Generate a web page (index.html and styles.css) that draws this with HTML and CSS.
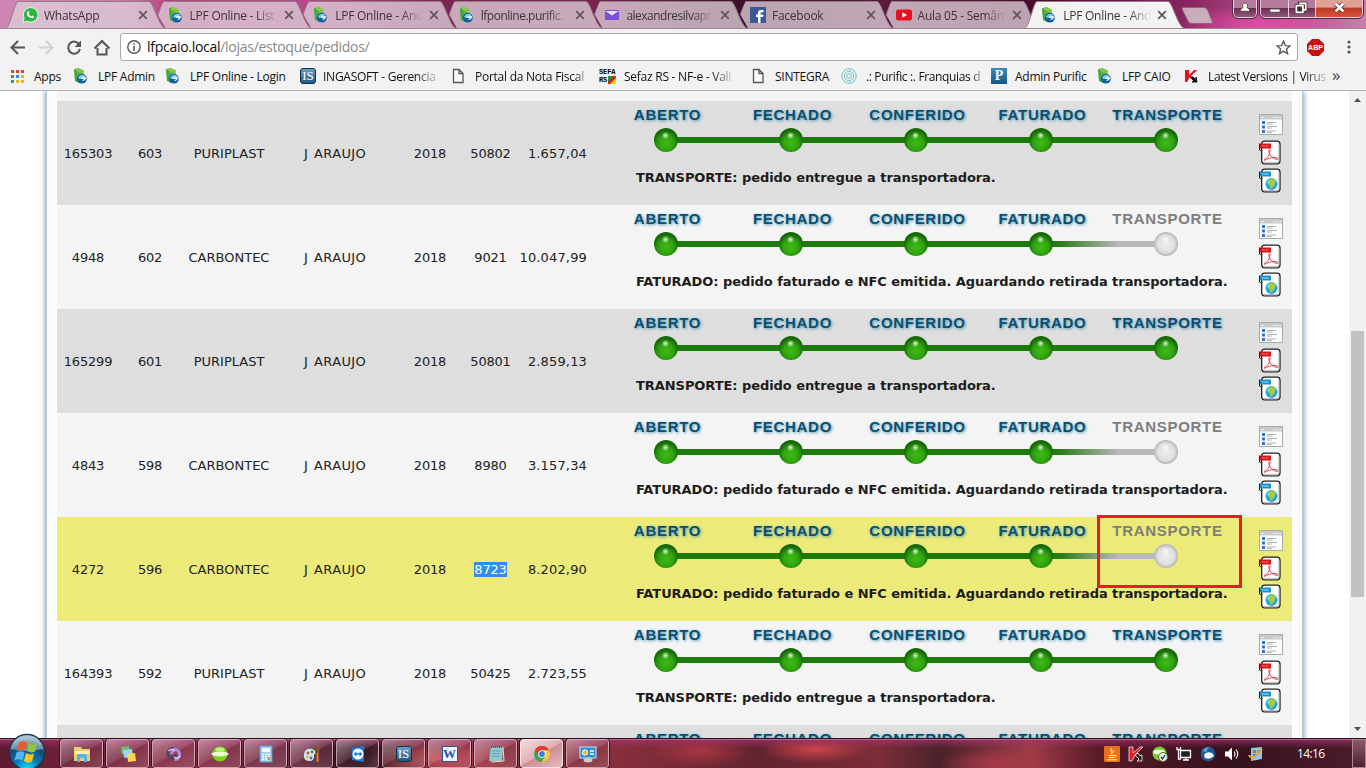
FILE: index.html
```html
<!DOCTYPE html>
<html lang="pt-BR">
<head>
<meta charset="utf-8">
<title>LPF Online - Andamento</title>
<link rel="stylesheet" href="styles.css">
</head>
<body>
<svg class="defs" width="0" height="0">
  <defs>
    <radialGradient id="gGreen" cx=".5" cy=".62" r=".52"><stop offset="0" stop-color="#3fbb14"/><stop offset=".6" stop-color="#30a310"/><stop offset="1" stop-color="#17690a"/></radialGradient>
    <radialGradient id="gGray" cx=".5" cy=".5" r=".5"><stop offset="0" stop-color="#ececec"/><stop offset=".7" stop-color="#e0e0e0"/><stop offset="1" stop-color="#b4b4b4"/></radialGradient>
    <radialGradient id="gShine"><stop offset="0" stop-color="#fff" stop-opacity=".85"/><stop offset="1" stop-color="#fff" stop-opacity=".1"/></radialGradient>
    <linearGradient id="gFade"><stop offset="0" stop-color="#1d7a0b"/><stop offset=".15" stop-color="#257d14"/><stop offset=".62" stop-color="#b9b9b9"/><stop offset="1" stop-color="#b9b9b9"/></linearGradient>
    <radialGradient id="gOrb" cx=".5" cy="1" r=".9"><stop offset="0" stop-color="#19e2ff"/><stop offset=".4" stop-color="#0b79b8"/><stop offset=".75" stop-color="#17476f"/><stop offset="1" stop-color="#7fa3bd"/></radialGradient>
    <linearGradient id="gLeaf" x2="1"><stop offset="0" stop-color="#2c9e3a"/><stop offset="1" stop-color="#9ccb4a"/></linearGradient>
  </defs>
  <symbol id="ball" viewBox="0 0 24 24"><circle cx="12" cy="12" r="12" fill="url(#gGreen)"/><circle cx="11.500" cy="7.500" r="3.400" fill="url(#gShine)"/></symbol>
  <symbol id="ballOff" viewBox="0 0 24 24"><circle cx="12" cy="12" r="12" fill="url(#gGray)"/><circle cx="11.500" cy="7.500" r="3.400" fill="url(#gShine)"/></symbol>
  <symbol id="trackDone" viewBox="0 0 625 24"><path d="M62 9h500v6H62z" fill="#1d7a0b"/><use href="#ball" x="50" width="24" height="24"/><use href="#ball" x="175" width="24" height="24"/><use href="#ball" x="300" width="24" height="24"/><use href="#ball" x="425" width="24" height="24"/><use href="#ball" x="550" width="24" height="24"/></symbol>
  <symbol id="trackBilled" viewBox="0 0 625 24"><path d="M62 9h376v6H62z" fill="#1d7a0b"/><path d="M437 9h125v6H437z" fill="url(#gFade)"/><use href="#ball" x="50" width="24" height="24"/><use href="#ball" x="175" width="24" height="24"/><use href="#ball" x="300" width="24" height="24"/><use href="#ball" x="425" width="24" height="24"/><use href="#ballOff" x="550" width="24" height="24"/></symbol>
  <symbol id="docs" viewBox="0 0 24 80">
    <path d="M.5 1.500h23v20H.5z" fill="#fdfdfd" stroke="#a9a9a9"/><path d="M1 2h22v4.500H1z" fill="#c9c9c9"/><path d="M2 4.500h3M15 4.500h2M18 4.500h2M21 4.500h1" stroke="#eee"/>
    <path d="M3 8h3v3H3zM3 12.500h3v3H3zM3 17h3v3H3z" fill="#2f74d0"/><path d="M8 9.500h9M8 11h6M8 13.500h10M8 15h5M8 18h9M8 19.500h5" stroke="#b4b4b4"/>
    <g id="sheet"><rect x="2.700" y="28.200" width="18.300" height="22.600" rx="3" fill="#fff" stroke="#222" stroke-width="1.300"/><path d="M20 31v17M5 49.800h14" stroke="#aaa"/></g>
    <path d="M1 30.500h11v5H1z" fill="#d3151c"/><path d="M3 33h7" stroke="#f07078"/><path d="M.5 30.500V37l2 1" stroke="#222" fill="none"/>
    <path d="M5 47c3-1 6-6 6-9.500 0-2-2-1-1 2 1 4 4 6 8 7 2 0 1-2-1-2-4 0-9 1-12 3" fill="none" stroke="#e0363c" stroke-width=".9"/>
    <use href="#sheet" y="28"/>
    <path d="M1 58.500h11v5H1z" fill="#1c8fd0"/><path d="M3 61h7" stroke="#9bd6f5"/><path d="M.5 58.500V65l2 1" stroke="#222" fill="none"/>
    <circle cx="12.500" cy="71" r="6" fill="#28a4dd"/><path d="M11 66q5-1 6 2l-2 5-3 3q-1-4-3-5t2-5z" fill="#a4ce3c"/><path d="M7.500 69l3-2-1 4z" fill="#7fe0d0"/>
  </symbol>
  <symbol id="lpf" viewBox="0 0 16 16"><path d="M1 1.500L5 0l6 2.500v5L6 15l-4-2z" fill="url(#gLeaf)"/><path d="M5 0l6 2.500-5 1.500-4-2z" fill="#86c84a"/><circle cx="8.800" cy="10.700" r="4.900" fill="#12609f"/><path d="M5 9.500q3-4.500 7.500-1.500l-2 2-4 1z" fill="#7fd0ee"/><path d="M8 9.500l5-.5q0 4-4 4l2-2H8z" fill="#f3fbff"/></symbol>
  <symbol id="page" viewBox="0 0 16 16"><path d="M3.500 1.500h5.500l4 4v9h-9.500zM9 1.500v4h4" fill="#fafafa" stroke="#555" stroke-width="1.300"/></symbol>
  <symbol id="x" viewBox="0 0 10 10"><path d="M1.200 1.200l7.600 7.600M8.800 1.200l-7.600 7.600" stroke="#5f565c" stroke-width="1.700"/></symbol>
  <symbol id="tab" viewBox="0 0 160 28"><path d="M.5 28C4 26 9 1.500 12 1.500H143C147 1.500 152 24 158.500 28" stroke="#8d7b86" stroke-width="1"/></symbol>
</svg>

<header class="titlebar">
  <nav class="tabs">
    <div class="tab"><svg class="shape"><use href="#tab"/></svg>
      <svg class="fav" viewBox="0 0 16 16"><path d="M1 15.500L2.200 11A7.200 7.200 0 1 1 5 14z" fill="#2cb742" stroke="#fff" stroke-width=".8"/><path d="M5.400 4.500q1-1 1.600.500l.5 1.300-.7.900q.9 1.600 2.500 2.200l.9-1 1.800.9q.2 1.800-1.800 1.900Q6 11 4.900 7q-.1-1.500.5-2.500z" fill="#fff"/></svg>
      <span class="name">WhatsApp</span><svg class="close"><use href="#x"/></svg></div>
    <div class="tab"><svg class="shape"><use href="#tab"/></svg><svg class="fav"><use href="#lpf"/></svg><span class="name">LPF Online - List</span><svg class="close"><use href="#x"/></svg></div>
    <div class="tab"><svg class="shape"><use href="#tab"/></svg><svg class="fav"><use href="#lpf"/></svg><span class="name">LPF Online - And</span><svg class="close"><use href="#x"/></svg></div>
    <div class="tab"><svg class="shape"><use href="#tab"/></svg><svg class="fav"><use href="#lpf"/></svg><span class="name tight">lfponline.purific.</span><svg class="close"><use href="#x"/></svg></div>
    <div class="tab"><svg class="shape"><use href="#tab"/></svg><svg class="fav" viewBox="0 0 16 16"><rect x="1" y="3" width="14" height="10" rx="1" fill="#7a52d8"/><path d="M1.500 4L8 8.500 14.500 4" fill="#e8e0ff"/></svg><span class="name tight">alexandresilvapr</span><svg class="close"><use href="#x"/></svg></div>
    <div class="tab"><svg class="shape"><use href="#tab"/></svg><svg class="fav" viewBox="0 0 16 16"><path d="M0 0h16v16H0z" fill="#3b5998"/><path d="M8 16v-6H6V7.500h2V6q0-3 3-3h2.500v2.300H12q-1.500 0-1.500 1.200v1h3L13 10h-2.500v6z" fill="#fff"/></svg><span class="name">Facebook</span><svg class="close"><use href="#x"/></svg></div>
    <div class="tab"><svg class="shape"><use href="#tab"/></svg><svg class="fav" viewBox="0 0 16 16"><rect y="2.500" width="16" height="11" rx="2.500" fill="#e8101c"/><path d="M6.300 5.300v5.400L11 8z" fill="#fff"/></svg><span class="name">Aula 05 - Semân</span><svg class="close"><use href="#x"/></svg></div>
    <div class="tab active"><svg class="shape"><use href="#tab"/></svg><svg class="fav"><use href="#lpf"/></svg><span class="name">LPF Online - And</span><svg class="close"><use href="#x"/></svg></div>
    <svg class="newtab" viewBox="0 0 34 17"><path d="M1 2Q1 .500 3 .500H23Q25.500 .500 27 4L31.500 15Q32 16.500 30 16.500H11Q8 16.500 7 14z" fill="#c9adba" stroke="#8c6478"/></svg>
  </nav>
  <div class="winbtns">
    <span class="wb user"><svg viewBox="0 0 24 18"><path d="M12 3a3 3 0 0 1 2 5q3 .500 3.500 4h-11q.5-3.500 3.500-4a3 3 0 0 1 2-5z" fill="#fff" stroke="#543"/></svg></span>
    <span class="group">
      <span class="wb min"><svg viewBox="0 0 29 18"><rect x="9.500" y="9.500" width="11" height="3.500" fill="#fff" stroke="#544"/></svg></span>
      <span class="wb max"><svg viewBox="0 0 27 18"><path d="M10.500 3.500h7v7h-7zM7.500 6h7v7h-7z" fill="none" stroke="#433" stroke-width="3.400"/><path d="M10.500 3.500h7v7h-3M7.500 6h7v7h-7z" fill="none" stroke="#fff" stroke-width="1.800"/></svg></span>
      <span class="wb exit"><svg viewBox="0 0 47 18"><path d="M20 4l8 8M28 4l-8 8" stroke="#6d2a22" stroke-width="4.500"/><path d="M20 4l8 8M28 4l-8 8" stroke="#fff" stroke-width="2.800"/></svg></span>
    </span>
  </div>
</header>

<div class="toolbar">
  <svg class="nav" viewBox="0 0 112 34">
    <g fill="none" stroke="#555" stroke-width="2"><path d="M25 18.500H12M18 12l-6.500 6.500L18 25"/><path d="M39 18.500h13M46 12l6.500 6.500L46 25" stroke="#d0d0d0"/><path d="M79.300 15.500A6 6 0 1 0 80 20"/><path d="M94.500 19.500L102 12l7.500 7.500M97.500 19v6.500h9V19"/></g><path d="M81 11.500V18h-6.500z" fill="#555"/>
  </svg>
  <div class="url">
    <svg class="info" viewBox="0 0 14 14"><circle cx="7" cy="7" r="6.200" fill="none" stroke="#555" stroke-width="1.400"/><path d="M7 6v5M7 3.200v1.600" stroke="#555" stroke-width="1.600"/></svg>
    <span class="address">lfpcaio.local<i>/lojas/estoque/pedidos/</i></span>
    <svg class="star" viewBox="0 0 14 14"><path d="M7 1l1.700 4.200 4.500.3-3.500 2.900 1.100 4.400L7 10.400l-3.800 2.400 1.100-4.400L.8 5.500l4.500-.3z" fill="none" stroke="#5a5a5a" stroke-width="1.300"/></svg>
  </div>
  <div class="abp">ABP</div>
  <svg class="more" viewBox="0 0 4 14"><circle cx="2" cy="2" r="1.600"/><circle cx="2" cy="7" r="1.600"/><circle cx="2" cy="12" r="1.600"/></svg>
</div>

<nav class="bookmarks">
  <a class="b1"><svg viewBox="0 0 16 16"><path d="M2 2h3v3H2zM7 2h3v3H7zM12 2h3v3h-3z" fill="#ea3d30"/><path d="M2 7h3v3H2zM2 12h3v3H2z" fill="#2f9e4f"/><path d="M7 7h3v3H7z" fill="#2b8af0"/><path d="M12 7h3v3h-3zM7 12h3v3H7zM12 12h3v3h-3z" fill="#fbb317"/></svg><span>Apps</span></a>
  <a class="b2"><svg><use href="#lpf"/></svg><span>LPF Admin</span></a>
  <a class="b3"><svg><use href="#lpf"/></svg><span>LPF Online - Login</span></a>
  <a class="b4"><span class="isicon">IS</span><span class="fade">INGASOFT - Gerencia</span></a>
  <a class="b5"><svg><use href="#page"/></svg><span class="fade end">Portal da Nota Fiscal</span></a>
  <a class="b6"><span class="sefa"><b>SEFA</b><b>RS<svg viewBox="0 0 8 8"><path d="M0 0h8L0 8z" fill="#1a9a2c"/><path d="M8 0v8H0z" fill="#f5d400"/><path d="M6 0h2v2L2 8H0V6z" fill="#e01616"/></svg></b></span><span class="fade">Sefaz RS - NF-e - Vali</span></a>
  <a class="b7"><svg><use href="#page"/></svg><span>SINTEGRA</span></a>
  <a class="b8"><svg viewBox="0 0 16 16"><g fill="none" stroke="#6cc0c0"><circle cx="8" cy="8" r="7.200"/><circle cx="8" cy="8" r="4.700"/><circle cx="8" cy="8" r="2.400" stroke="#7ab6cc"/></g></svg><span class="fade end">.: Purific :. Franquias d</span></a>
  <a class="b9"><span class="picon">P</span><span>Admin Purific</span></a>
  <a class="b10"><svg><use href="#lpf"/></svg><span>LFP CAIO</span></a>
  <a class="b11"><svg viewBox="0 0 16 16"><path d="M2 2h4v5l5-5h3L7 9l-3 5H2z" fill="#e3101a"/><path d="M7 9l3 0 3 3V9l1 5H9l2-1z" fill="#111" stroke="#111"/></svg><span class="fade">Latest Versions | Virus</span></a>
  <a class="b12"><span>»</span></a>
</nav>

<main class="viewport">
  <section class="sheet">
    <div class="row sliver"></div>
    <div class="row odd"><span>165303</span><span>603</span><span>PURIPLAST</span><span class="who">J ARAUJO</span><span>2018</span><span>50802</span><span class="val">1.657,04</span>
      <div class="track"><div class="steps"><b>ABERTO</b><b>FECHADO</b><b>CONFERIDO</b><b>FATURADO</b><b>TRANSPORTE</b></div><svg class="line"><use href="#trackDone"/></svg><p>TRANSPORTE: pedido entregue a transportadora.</p></div><svg class="docs"><use href="#docs"/></svg></div>
    <div class="row"><span>4948</span><span>602</span><span>CARBONTEC</span><span class="who">J ARAUJO</span><span>2018</span><span>9021</span><span class="val">10.047,99</span>
      <div class="track"><div class="steps"><b>ABERTO</b><b>FECHADO</b><b>CONFERIDO</b><b>FATURADO</b><b class="off">TRANSPORTE</b></div><svg class="line"><use href="#trackBilled"/></svg><p>FATURADO: pedido faturado e NFC emitida. Aguardando retirada transportadora.</p></div><svg class="docs"><use href="#docs"/></svg></div>
    <div class="row odd"><span>165299</span><span>601</span><span>PURIPLAST</span><span class="who">J ARAUJO</span><span>2018</span><span>50801</span><span class="val">2.859,13</span>
      <div class="track"><div class="steps"><b>ABERTO</b><b>FECHADO</b><b>CONFERIDO</b><b>FATURADO</b><b>TRANSPORTE</b></div><svg class="line"><use href="#trackDone"/></svg><p>TRANSPORTE: pedido entregue a transportadora.</p></div><svg class="docs"><use href="#docs"/></svg></div>
    <div class="row"><span>4843</span><span>598</span><span>CARBONTEC</span><span class="who">J ARAUJO</span><span>2018</span><span>8980</span><span class="val">3.157,34</span>
      <div class="track"><div class="steps"><b>ABERTO</b><b>FECHADO</b><b>CONFERIDO</b><b>FATURADO</b><b class="off">TRANSPORTE</b></div><svg class="line"><use href="#trackBilled"/></svg><p>FATURADO: pedido faturado e NFC emitida. Aguardando retirada transportadora.</p></div><svg class="docs"><use href="#docs"/></svg></div>
    <div class="row hover"><span>4272</span><span>596</span><span>CARBONTEC</span><span class="who">J ARAUJO</span><span>2018</span><span><mark>8723</mark></span><span class="val">8.202,90</span>
      <div class="track"><div class="steps"><b>ABERTO</b><b>FECHADO</b><b>CONFERIDO</b><b>FATURADO</b><b class="off">TRANSPORTE</b></div><svg class="line"><use href="#trackBilled"/></svg><p>FATURADO: pedido faturado e NFC emitida. Aguardando retirada transportadora.</p></div><svg class="docs"><use href="#docs"/></svg><div class="redbox"></div></div>
    <div class="row"><span>164393</span><span>592</span><span>PURIPLAST</span><span class="who">J ARAUJO</span><span>2018</span><span>50425</span><span class="val">2.723,55</span>
      <div class="track"><div class="steps"><b>ABERTO</b><b>FECHADO</b><b>CONFERIDO</b><b>FATURADO</b><b>TRANSPORTE</b></div><svg class="line"><use href="#trackDone"/></svg><p>TRANSPORTE: pedido entregue a transportadora.</p></div><svg class="docs"><use href="#docs"/></svg></div>
    <div class="row odd last"><span></span><span></span><span></span><span></span><span></span><span></span><span></span>
      <div class="track"><div class="steps"><b>ABERTO</b><b>FECHADO</b><b>CONFERIDO</b><b>FATURADO</b><b>TRANSPORTE</b></div></div></div>
  </section>
  <div class="scroll">
    <svg viewBox="0 0 17 17"><path d="M5 11h7l-3.500-4z" fill="#505050"/></svg>
    <div class="thumb"></div>
    <svg class="down" viewBox="0 0 17 17"><path d="M5 6h7l-3.500 4z" fill="#505050"/></svg>
  </div>
</main>

<footer class="taskbar">
  <svg class="orb" viewBox="0 0 38 38"><circle cx="19" cy="19" r="17.700" fill="url(#gOrb)" stroke="#1c3448" stroke-width="1.200"/><path d="M3 16Q6 3 19 2.500 32 3 35 16 19 20 3 16z" fill="#fff" opacity=".35"/>
    <path d="M11 10q4-3 8-.5l-2 8q-4-2-8 .5z" fill="#ee5a26"/><path d="M20.500 10q4 2.500 8.500.5l-2 8q-4 2-8-.5z" fill="#8fc640"/><path d="M8.500 19.500q4-2.500 8 0l-2 8q-4-2.500-8 0z" fill="#5ab4f0"/><path d="M18 20q4 2.500 8 .5l-2 8q-4 2-8-.5z" fill="#fcc820"/></svg>
  <div class="apps">
    <span class="app"><svg viewBox="0 0 18 18"><path d="M1 4V2h7l1 2h8v12H1z" fill="#efcf6c"/><path d="M2 6h14v3H2z" fill="#fff3b8"/><path d="M4 17v-6q0-2 2-2h6q2 0 2 2v6h-3v-4H7v4z" fill="#59b2e0"/></svg></span>
    <span class="app"><svg viewBox="0 0 18 18"><path d="M2 2l8-1 1 7-8 1z" fill="#69c264"/><path d="M4 5l9-1 1 8-9 1z" fill="#9fd0f5"/><path d="M8 9l8-1 1 8-8 1z" fill="#fbd84c"/></svg></span>
    <span class="app"><svg viewBox="0 0 18 18"><path d="M8.500 3.500A4.700 4.700 0 1 0 8 14q3 0 3-4" fill="none" stroke="#4c4868" stroke-width="3"/><path d="M9.500 14.500A5 5 0 1 0 9.500 4.500Q6.500 5 7 9" fill="none" stroke="#a58ce4" stroke-width="3.200"/><path d="M3.500 6q3-3.500 6 0M9 12q4 2.500 6-1" fill="none" stroke="#e4e0f8" stroke-width="1.200"/></svg></span>
    <span class="app"><svg viewBox="0 0 18 18"><circle cx="9" cy="9" r="7.500" fill="#72d813"/><ellipse cx="9" cy="9" rx="8.500" ry="2.400" fill="#eaffd8"/><ellipse cx="9" cy="4.500" rx="4.500" ry="2" fill="#b8f47d"/></svg></span>
    <span class="app"><svg viewBox="0 0 18 18"><rect x="3" y="1" width="12" height="16" fill="#9ccdf0" stroke="#5597cc"/><path d="M5 3h8v4H5z" fill="#f4fbff"/><path d="M5 9.500h8M5 12h8M5 14.500h8" stroke="#fff" stroke-width="1.500" stroke-dasharray="2 1"/><path d="M11 12h2v3h-2z" fill="#ee8d24"/></svg></span>
    <span class="app"><svg viewBox="0 0 18 18"><path d="M1 9q1-6 8-5 6 2 2 6 1 6-5 6t-5-7z" fill="#cbe5f2"/><circle cx="5" cy="8" r="1.400" fill="#db3b2d"/><circle cx="9" cy="7" r="1.400" fill="#2d9d48"/><circle cx="4.500" cy="12" r="1.400" fill="#f3b920"/><circle cx="8" cy="13" r="1.400" fill="#3677db"/><path d="M13.500 8h2v9h-2z" fill="#e38318"/><path d="M13 1h4l-1 7h-2z" fill="#8c5429"/></svg></span>
    <span class="app"><svg viewBox="0 0 18 18"><path d="M3 3l12-2v16L3 15z" fill="#167cdf"/><circle cx="9" cy="9" r="5.500" fill="#fff"/><path d="M4.500 9l3-2.500v1.700h3V6.500l3 2.500-3 2.500V9.800h-3v1.700z" fill="#167cdf"/></svg></span>
    <span class="app"><span class="isicon">IS</span></span>
    <span class="app"><span class="word">W</span></span>
    <span class="app"><svg viewBox="0 0 18 18"><path d="M4 2h12l-1 14H2z" fill="#8ecad4"/><path d="M16 2l1 14-13 1" fill="none" stroke="#e8e4bb"/><path d="M5 6h9M5 8.500h8M4.500 11H13" stroke="#61a5b5"/><path d="M4 2h12" stroke="#555" stroke-width="2" stroke-dasharray="1 1"/></svg></span>
    <span class="app on"><svg viewBox="0 0 18 18"><circle cx="9" cy="9" r="8" fill="#34a853"/><path d="M9 1a8 8 0 0 1 7 4.200H9L5.700 11 2 5.200A8 8 0 0 1 9 1z" fill="#e33b2e"/><path d="M16 5.200A8 8 0 0 1 8.500 17L12.500 11 11 5.200z" fill="#fcc934"/><circle cx="9" cy="9" r="3.800" fill="#fff"/><circle cx="9" cy="9" r="2.900" fill="#3b7ded"/></svg></span>
    <span class="app"><svg viewBox="0 0 18 18"><rect x="1" y="2" width="16" height="11" fill="#2f8fd6" stroke="#bfe2f7"/><circle cx="6" cy="7.500" r="2.700" fill="#f5b12c" stroke="#fff"/><path d="M11 6h4M11 9h4" stroke="#fff" stroke-width="1.500"/><ellipse cx="9" cy="15" rx="4.500" ry="2.500" fill="#ccc"/></svg></span>
  </div>
  <div class="tray">
    <svg viewBox="0 0 16 16"><rect width="16" height="16" rx="1" fill="#e8701a"/><path d="M8 2q-3 2-.5 3.500Q9 7 7 8M10 4Q7.500 6 9 7.500M4.500 9.500h6.500q2.500-.5 0 2M5 11.500h5M3 13.800h10" fill="none" stroke="#fff" stroke-width=".9"/></svg>
    <svg viewBox="0 0 16 16"><path d="M1 1h4v6l7-6h3L7 9l-3 6H1z" fill="#e51e25" stroke="#fff" stroke-width=".7"/><path d="M7 9l3-2 2 3 2-1v6H9l2-2z" fill="#222" stroke="#fff" stroke-width=".8"/></svg>
    <svg viewBox="0 0 16 16"><circle cx="7.500" cy="7.500" r="7" fill="#76cf2c"/><ellipse cx="7" cy="6" rx="6" ry="2.500" fill="#ecffd9"/><circle cx="11" cy="11" r="4.500" fill="#eee" stroke="#487328"/><path d="M9 11l1.500 2L13 9" fill="none" stroke="#333" stroke-width="1.300"/></svg>
    <svg viewBox="0 0 16 16"><path d="M4.500 4.500h10v7h-10z" fill="#222" stroke="#fff" stroke-width="1.300"/><path d="M7 14h6M10 12v2M2.500 5v8H5M1 1v2.500h3.500V1M2.500 3.500V6" fill="none" stroke="#fff" stroke-width="1.300"/></svg>
    <svg viewBox="0 0 16 16"><circle cx="8" cy="8" r="7.300" fill="#23598e"/><path d="M2 5q3-4 8-4-4 2-3 5z" fill="#55a1dc"/><path d="M4 9q2-4 8-2l2 3q-4 4-9 2z" fill="#f4f6f8"/></svg>
    <svg viewBox="0 0 16 16"><path d="M1 5.500h3l4-4v13l-4-4H1z" fill="#fff"/><path d="M10 5.500q2 2.500 0 5M12 3.500q3.500 4.500 0 9" fill="none" stroke="#fff" stroke-width="1.100"/></svg>
    <svg viewBox="0 0 16 16"><path d="M3 2l11-1v12l-11 2z" fill="#8dc7ec"/><path d="M5 4h3v3H5z" fill="#e4642c"/><path d="M9 4h3v3H9z" fill="#7db63a"/><path d="M5 8h3v3H5z" fill="#2f77c8"/><path d="M1 9q1 4 6 1t7-7" stroke="#f2a51f" stroke-width="1.800" fill="none"/></svg>
  </div>
  <time>14:16</time>
  <div class="peek"></div>
</footer>
</body>
</html>
```
FILE: styles.css
```css
* { box-sizing: border-box; }
html, body { height: 100%; }
body { margin: 0; width: 1366px; height: 768px; overflow: hidden; display: flex; flex-direction: column; background: #fff; font: 12px "Open Sans", "Noto Sans", sans-serif; color: #222; }
.defs { position: absolute; }

.titlebar { height: 29px; flex: none; display: flex; border-bottom: 1px solid #a08494; background:
  radial-gradient(ellipse 90px 20px at 1262px 25px, #e14ba5 0, transparent 100%),
  linear-gradient(90deg, #cf86b4 0, #c774a9 130px, #b3437f 170px, #b64b8c 310px, #7d2553 440px, #7a2450 590px, #3f1027 740px, #5b1a3d 890px, #4a0c2c 1040px, #8a2560 1190px, #b14b8c 1260px, #c77fa9 1366px); }
.tabs { display: flex; padding-left: 6px; height: 28px; width: 1230px; }
.tab { position: relative; width: 145.6px; flex: none; display: flex; align-items: flex-start; padding: 7px 0 0 16px; color: #3d3339; letter-spacing: -.25px; }
.shape { position: absolute; left: 0; top: 0; width: 160px; height: 28px; fill: rgba(222, 206, 217, .78); }
.tab:not(:first-child) .shape { clip-path: polygon(12px 0, 160px 0, 160px 28px, 14px 28px, 6px 14px); }
.tab.active:not(:first-child) .shape { fill: #f2f2f2; clip-path: none; }
.fav { position: relative; width: 16px; height: 16px; flex: none; }
.name { position: relative; width: 90px; margin: 0 6px 0 6px; line-height: 17px; white-space: nowrap; flex: none; -webkit-mask-image: linear-gradient(90deg, #000 66px, transparent 88px); mask-image: linear-gradient(90deg, #000 66px, transparent 88px); }
.tight { letter-spacing: -.5px; }
.close { position: relative; width: 10px; height: 10px; margin: 3px 0 0 -2px; flex: none; }
.newtab { width: 34px; height: 17px; margin: 7px 0 0 10px; flex: none; }
.winbtns { display: flex; padding-left: 3px; height: 19px; }
.wb { display: block; height: 18px; border: 1px solid #e5cfdb; border-top: 0; background: linear-gradient(#b47a9b 0 45%, #6c2d51 50%, #93597d); }
.wb svg { display: block; width: 100%; height: 17px; }
.user { width: 24px; border-radius: 0 0 5px 5px; outline: 1px solid #4f2a3e; }
.group { display: flex; outline: 1px solid #4f2a3e; border-radius: 0 0 5px 5px; height: 18px; margin-left: 3px; }
.min { width: 29px; border-radius: 0 0 0 5px; }
.max { width: 27px; border-left: 0; }
.exit { width: 47px; border-left: 0; border-radius: 0 0 5px; background: linear-gradient(#dfa095 0 40%, #bd3c28 50%, #d75439); }

.toolbar { height: 34px; flex: none; background: #f2f2f2; display: flex; align-items: flex-start; }
.nav { width: 112px; height: 34px; margin-right: 8px; }
.url { width: 1178px; height: 28px; margin-top: 4px; border: 1px solid #a9a9a9; border-radius: 3px; background: #fff; display: flex; align-items: center; padding: 0 6px; }
.info { width: 14px; height: 14px; }
.address { font-size: 14px; letter-spacing: -.28px; margin-left: 6px; flex: 1; line-height: 18px; color: #111; }
.address i { font-style: normal; color: #888; }
.star { width: 15px; height: 15px; }
.abp { width: 17px; height: 17px; margin: 10px 0 0 9px; background: #c70d0f; color: #fff; font: bold 7px/17px "Liberation Sans", sans-serif; text-align: center; clip-path: polygon(30% 0, 70% 0, 100% 30%, 100% 70%, 70% 100%, 30% 100%, 0 70%, 0 30%); }
.more { width: 4px; height: 14px; margin: 11px 0 0 23px; fill: #555; }

.bookmarks { height: 28px; flex: none; background: #f2f2f2; border-bottom: 1px solid #b5b1b3; display: flex; padding: 5px 0 0 9px; color: #111; letter-spacing: -.25px; white-space: nowrap; }
.bookmarks a { display: flex; height: 17px; flex: none; line-height: 17px; }
.bookmarks a > svg { width: 16px; height: 16px; margin-right: 9px; flex: none; }
.fade { -webkit-mask-image: linear-gradient(90deg, #000 82%, transparent 105%); mask-image: linear-gradient(90deg, #000 82%, transparent 105%); }
.end { -webkit-mask-image: linear-gradient(90deg, #000 92%, transparent 105%); mask-image: linear-gradient(90deg, #000 92%, transparent 105%); }
.b1 { width: 64px; }
.b2 { width: 92px; }
.b3 { width: 135px; }
.b4 { width: 150px; }
.b5 { width: 149px; }
.b6 { width: 151px; }
.b7 { width: 91px; }
.b8 { width: 150px; letter-spacing: -.35px; }
.b9 { width: 106px; }
.b10 { width: 86px; }
.b11 { width: 149px; letter-spacing: -.35px; }
.bookmarks .b12 { font-size: 17px; line-height: 14px; color: #444; }
.isicon { width: 16px; height: 16px; margin-right: 7px; border: 1px solid #17303f; border-radius: 3px; background: linear-gradient(#6a9fc4, #24587f); color: #fff; font: 13px/14px "Liberation Serif", serif; text-align: center; letter-spacing: 0; flex: none; }
.picon { width: 16px; height: 16px; margin-right: 8px; background: linear-gradient(#3f8bbd, #155786); color: #fff; font: bold 14px/16px "Liberation Serif", serif; text-align: center; }
.sefa { width: 17px; height: 16px; margin-right: 8px; flex: none; color: #000; }
.sefa b { display: flex; gap: 1px; font: bold 7px/8px "Liberation Mono", monospace; letter-spacing: -.1px; }
.sefa svg { width: 8px; height: 8px; }

.viewport { flex: 1; min-height: 0; overflow: hidden; display: flex; background: #fff; }
.sheet { width: 1257px; margin-left: 46px; padding: 0 10px; border: 1px solid #a9cde4; border-width: 0 1px; background: #fbfdfd; box-shadow: 0 0 6px #777; height: 660px; flex: none; }
.row { position: relative; height: 104px; background: #f4f4f4; display: grid; grid-template-columns: 62px 62px 96px 116px 74px 47px 73px 625px 24px; align-items: center; text-align: center; font: 13px "DejaVu Sans", Verdana, sans-serif; letter-spacing: 0; }
.row > span:nth-child(-n+2), .row > span:nth-child(5), .row > span:nth-child(6) { letter-spacing: -.2px; }
.sliver { height: 10px; }
.odd { background: #dedede; }
.hover { background: #eceb79; }
.row > span { padding-top: 1px; }
.row > .who { letter-spacing: .35px; word-spacing: 1.5px; }
.row > .val { text-align: right; letter-spacing: .15px; }
mark { background: #318ef0; color: #fff; }
.track { align-self: start; margin-left: 17px; width: 625px; }
.steps { display: grid; grid-template-columns: repeat(5, 125px); height: 27px; padding: 5px 0 0 1px; }
.steps b { font: bold 15px/18px "Liberation Sans", Arial, sans-serif; letter-spacing: .7px; color: #0a4f70; text-shadow: 1px 1px 3px #4f98b8; }
.steps .off { color: #7e7e7e; text-shadow: none; }
.line { display: block; width: 625px; height: 24px; }
.track p { margin: 17px 0 0 32px; text-align: left; white-space: nowrap; font: bold 13px/18px "DejaVu Sans", Verdana, sans-serif; letter-spacing: -.06px; color: #1c1c1c; }
.docs { width: 24px; height: 80px; margin-left: 47px; align-self: start; margin-top: 12px; }
.redbox { position: absolute; left: 1040px; top: -2px; width: 145px; height: 73px; border: 3px solid #ec1c24; z-index: 2; }
.scroll { margin-left: 46px; width: 17px; background: #f1f1f1; display: flex; flex-direction: column; }
.scroll svg { width: 17px; height: 17px; }
.thumb { margin: 223px 2px 0; height: 266px; background: #c1c1c1; }
.scroll .down { margin-top: auto; }

.taskbar { position: relative; height: 30px; flex: none; display: flex; padding-left: 60px; border-top: 1px solid #2d0c1c; box-shadow: inset 0 1px #b56a8c; background:
  linear-gradient(rgba(170, 50, 120, .7), transparent 9px),
  radial-gradient(ellipse 55px 14px at 815px 10px, #cc444a, transparent),
  radial-gradient(ellipse 60px 18px at 1000px 26px, #a83b48, transparent),
  radial-gradient(ellipse 50px 16px at 700px 12px, #a8353f, transparent),
  radial-gradient(ellipse 70px 22px at 440px 20px, #c04450, transparent),
  linear-gradient(90deg, #5c1a30, #8c3148 180px, #6e2c40 300px, #2a0e17 360px, #8c3440 480px, #872e3b 620px, #612330 760px, #7c2d38 880px, #4b222a 940px, #9e3b46 1030px, #571a28 1100px, #34111c 1230px, #4e1c2c); }
.orb { position: absolute; left: 8px; top: -6px; width: 38px; height: 38px; }
.apps { display: flex; gap: 3px; width: 1040px; }
.app { width: 43px; height: 29px; border: 1px solid rgba(225, 190, 205, .75); border-radius: 3px; outline: 1px solid rgba(40, 8, 20, .75); background: linear-gradient(150deg, rgba(255,255,255,.42), rgba(255,255,255,.14) 50%, rgba(255,255,255,.04) 52%, rgba(255,255,255,.14)); display: flex; align-items: center; justify-content: center; }
.app svg { width: 18px; height: 18px; }
.app .isicon { margin: 0; }
.on { background: linear-gradient(150deg, #f1dde0, #e2b0b4 50%, #cf8d92 52%, #e5bcbd); border-color: #f6e6ea; }
.word { width: 16px; height: 16px; background: #eef4fc; border: 1px solid #2b579a; color: #1c51a8; font: bold 13px/14px "Liberation Serif", serif; text-align: center; }
.tray { display: flex; gap: 8px; padding-top: 7px; margin-left: 4px; }
.tray svg { width: 16px; height: 16px; }
time { color: #fff; margin: 6px 0 0 33px; line-height: 17px; width: 55px; letter-spacing: -.6px; }
.peek { width: 14px; height: 29px; border: 1px solid #a98793; background: linear-gradient(#8d5a6c, #502030); }
```
